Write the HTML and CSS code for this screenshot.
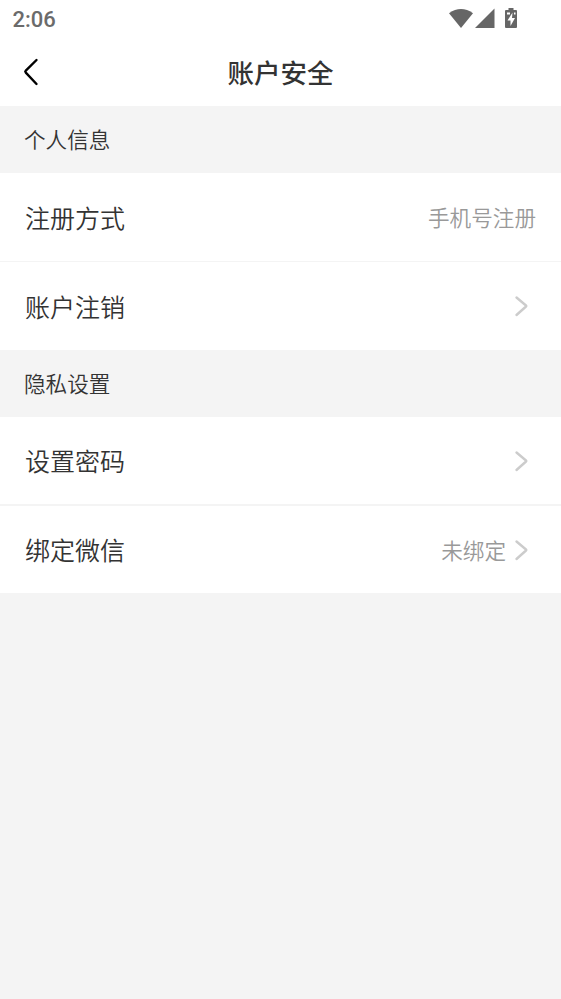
FILE: index.html
```html
<!DOCTYPE html>
<html lang="zh-CN">
<head>
<meta charset="utf-8">
<title>账户安全</title>
<link rel="stylesheet" href="styles.css">
</head>
<body>
<div class="status">
  <span class="time">2:06</span>
  <svg class="status-icons" width="72" height="40" viewBox="0 0 72 40">
    <path d="M0 13.200Q12 4.800 24 13.200L12 28Z"/>
    <path d="M45.500 8.500V28H26Z"/>
    <path d="M59.500 8h5v2h2.500q1 0 1 1v16q0 1-1 1H57q-1 0-1-1V11q0-1 1-1h2.500Z"/>
    <path class="bolt" d="M63.500 12.500L58.500 20.500H61.500V26L66 18H63Z"/>
    <path class="bolt" d="M58 12.500h3v2h-3zM65 12.500h1.500v2H65z"/>
  </svg>
</div>
<header class="nav">
  <svg class="back" width="16" height="28" viewBox="0 0 16 28"><path d="M13.500 2L2.800 12.700Q1.800 13.700 2.800 14.700L13.500 26"/></svg>
  <h1>账户安全</h1>
</header>
<h2 class="section">个人信息</h2>
<div class="group">
  <div class="row"><span class="label">注册方式</span><span class="value">手机号注册</span></div>
  <div class="row"><span class="label">账户注销</span><svg class="arrow" width="14" height="22" viewBox="0 0 14 22"><path d="M2.500 2.500L12 10.500Q12.600 11 12 11.500L2.500 20"/></svg></div>
</div>
<h2 class="section">隐私设置</h2>
<div class="group wide-gap">
  <div class="row"><span class="label">设置密码</span><svg class="arrow" width="14" height="22" viewBox="0 0 14 22"><path d="M2.500 2.500L12 10.500Q12.600 11 12 11.500L2.500 20"/></svg></div>
  <div class="row"><span class="label">绑定微信</span><span class="value">未绑定</span><svg class="arrow" width="14" height="22" viewBox="0 0 14 22"><path d="M2.500 2.500L12 10.500Q12.600 11 12 11.500L2.500 20"/></svg></div>
</div>
</body>
</html>
```
FILE: styles.css
```css
* { box-sizing: border-box; }
body { margin: 0; background: #f4f4f4; color: #333; font-family: "Noto Sans CJK SC", sans-serif; }
.status { height: 40px; background: #fff; display: flex; justify-content: space-between; padding: 0 40px 0 12.500px; }
.status-icons { fill: #666; }
.status-icons .bolt { fill: #fff; }
.time { font: 500 22px/40px Roboto, sans-serif; color: #6b6b6b; }
.nav { height: 66px; background: #fff; display: grid; grid-template-columns: 60px 1fr 60px; align-items: center; padding-bottom: 3px; }
.back { margin-left: 22.500px; fill: none; stroke: #000; stroke-width: 2.4; stroke-linecap: round; }
h1 { margin: 0; text-align: center; font-size: 26.500px; font-weight: 500; line-height: 62px; }
.section { margin: 0; padding-left: 24px; height: 67px; font-size: 21.600px; font-weight: 350; line-height: 65px; }
.group { display: grid; grid-template-rows: 88px 88px; gap: 1px; background: #f4f4f4; }
.wide-gap { grid-template-rows: 87px 87px; gap: 2px; }
.row { background: #fff; display: flex; align-items: center; padding: 0 25px; font-size: 25px; font-weight: 350; }
.label, .value { padding-bottom: 1px; }
.value { margin-left: auto; font-size: 21.600px; color: #999; }
.arrow { margin: 0 8px 0 auto; fill: none; stroke: #ccc; stroke-width: 2.4; stroke-linecap: round; }
.value + .arrow { margin-left: 8px; }
```
